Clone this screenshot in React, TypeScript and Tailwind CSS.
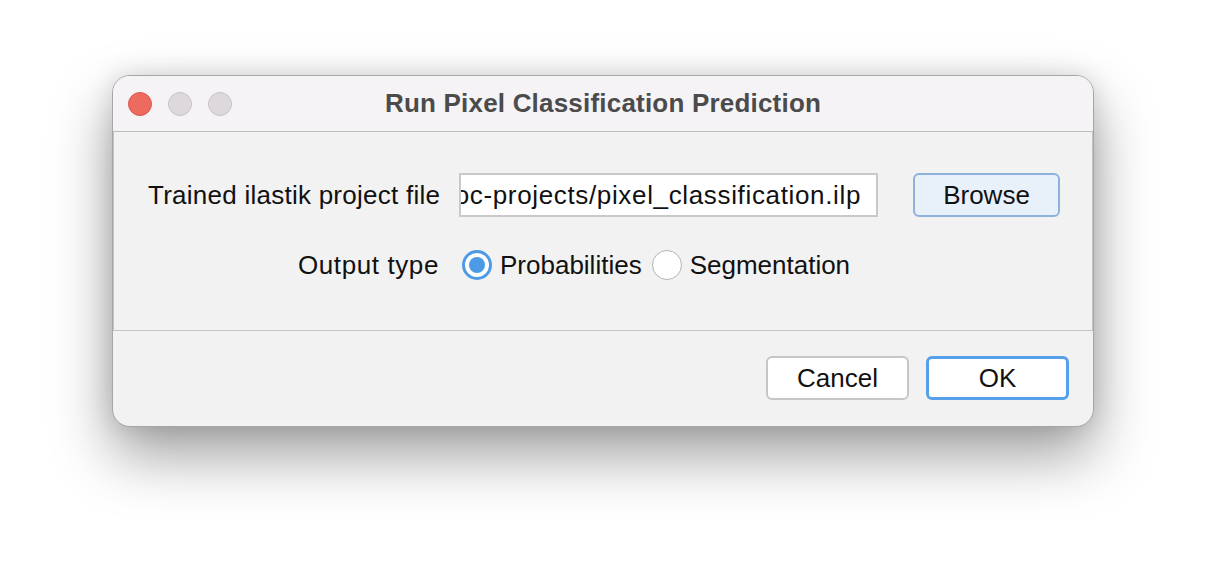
import React from 'react';

const font = { fontFamily: '"Liberation Sans", Arial, Helvetica, sans-serif' };

function TrafficLights() {
  return (
    <div className="flex items-center gap-[16px]">
      <span className="w-[24px] h-[24px] rounded-full bg-[#ed6a5e] border border-[#d7574b]" />
      <span className="w-[24px] h-[24px] rounded-full bg-[#dcd8dc] border border-[#c6c2c6]" />
      <span className="w-[24px] h-[24px] rounded-full bg-[#dcd8dc] border border-[#c6c2c6]" />
    </div>
  );
}

function Radio({ checked, label }: { checked?: boolean; label: string }) {
  return (
    <label className="flex items-center gap-[8px]">
      {checked ? (
        <span className="w-[30px] h-[30px] rounded-full border-[3px] border-[#4d9be6] bg-white flex items-center justify-center">
          <span className="w-[16px] h-[16px] rounded-full bg-[#4d9be6]" />
        </span>
      ) : (
        <span className="w-[30px] h-[30px] rounded-full border border-[#b3b3b3] bg-white" />
      )}
      <span>{label}</span>
    </label>
  );
}

export default function App() {
  return (
    <div className="min-h-screen bg-white flex justify-center pt-[75px]" style={font}>
      <div className="w-[982px] h-[352px] rounded-[18px] border border-[#a6a6a6] bg-[#f2f2f2] overflow-hidden flex flex-col shadow-[0_28px_60px_rgba(0,0,0,0.38),0_0_24px_rgba(0,0,0,0.12)] text-[26px] text-[#111]">
        {/* title bar */}
        <div className="relative h-[56px] shrink-0 bg-[#f6f3f6] border-b border-[#bdbdbd] flex items-center pl-[15px]">
          <TrafficLights />
          <div className="absolute inset-0 flex items-center justify-center font-bold text-[#4b4b4b] tracking-[0.2px]">
            Run Pixel Classification Prediction
          </div>
        </div>

        {/* form frame */}
        <div className="h-[199px] shrink-0 border-x border-b border-[#c4c4c4] pt-[41px] pl-[34px]">
          <div className="flex items-center h-[44px]">
            <div className="w-[291px] text-right whitespace-nowrap tracking-[0.25px]">Trained ilastik project file</div>
            <div className="ml-[20px] w-[419px] h-[44px] bg-white border-2 border-[#c9c9c9] flex items-center justify-end overflow-hidden pr-[15px] whitespace-nowrap">
              <span className="tracking-[0.65px]">doc-projects/pixel_classification.ilp</span>
            </div>
            <button className="ml-[35px] w-[147px] h-[44px] rounded-[6px] bg-[#e8f0fa] border-2 border-[#8eb1dc] text-[26px]">
              Browse
            </button>
          </div>
          <div className="flex items-center h-[30px] mt-[33px]">
            <div className="w-[291px] text-right whitespace-nowrap tracking-[0.6px]">Output type</div>
            <div className="ml-[23px] flex items-center gap-[10px]">
              <Radio checked label="Probabilities" />
              <Radio label="Segmentation" />
            </div>
          </div>
        </div>

        {/* buttons */}
        <div className="flex-1 flex justify-end items-start pt-[25px] pr-[24px] gap-[17px]">
          <button className="w-[143px] h-[44px] rounded-[6px] bg-white border-2 border-[#c6c6c6]">
            Cancel
          </button>
          <button className="w-[143px] h-[44px] rounded-[6px] bg-white border-[3px] border-[#55a0e8]">
            OK
          </button>
        </div>
      </div>
    </div>
  );
}
